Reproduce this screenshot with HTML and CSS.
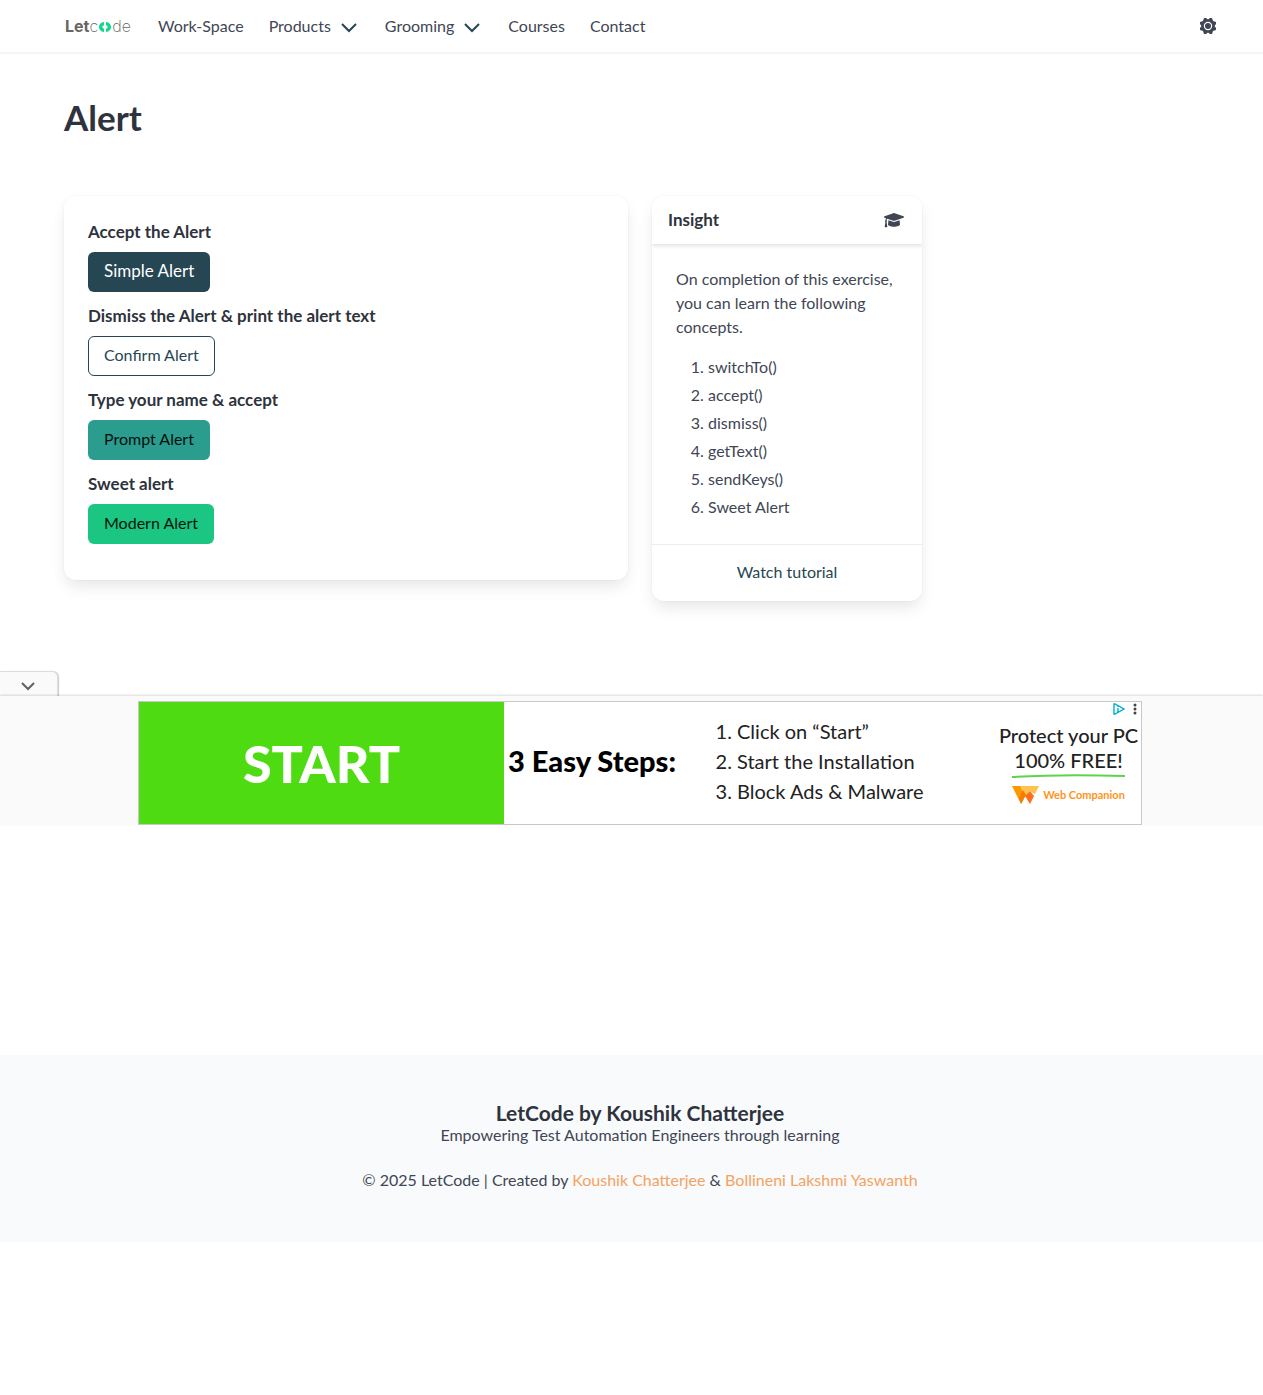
FILE: index.html
```html
<!DOCTYPE html>
<html lang="en">
<head>
<meta charset="utf-8">
<meta name="viewport" content="width=device-width, initial-scale=1">
<title>Alert | LetCode</title>
<link rel="stylesheet" href="styles.css">
</head>
<body>
<header class="navbar">
  <a class="logo" href="#" aria-label="Letcode"><b>Let</b><span>c</span><svg class="logo-mark" viewBox="0 0 14 10" aria-hidden="true"><path d="M6 0v3L4 5l2 2v3C3 9.800 1 7.500 1 5s2-4.800 5-5zM8 0v3l2 2-2 2v3c3-.2 5-2.500 5-5S11 .2 8 0z"/></svg><span>de</span></a>
  <nav class="nav-links" aria-label="Main">
    <a href="#">Work-Space</a>
    <a class="has-arrow" href="#">Products<svg class="arrow" viewBox="0 0 16 10" aria-hidden="true"><path d="M1 1l7 7 7-7"/></svg></a>
    <a class="has-arrow" href="#">Grooming<svg class="arrow" viewBox="0 0 16 10" aria-hidden="true"><path d="M1 1l7 7 7-7"/></svg></a>
    <a href="#">Courses</a>
    <a href="#">Contact</a>
  </nav>
  <button class="theme" type="button" aria-label="Toggle theme"><svg viewBox="0 0 16 16" aria-hidden="true"><circle cx="8" cy="8" r="6"/><path d="M10 0h2l1 3 3 1v2l-1.500 2 1.500 2v2l-3 1-1 3h-2L8 14.500 6 16H4l-1-3-3-1v-2l1.500-2L0 6V4l3-1 1-3h2l2 1.500z"/><circle class="ring" cx="8" cy="8" r="3.600"/></svg></button>
</header>

<main class="page">
  <h1>Alert</h1>
  <div class="columns">
    <section class="card exercise">
      <div class="field"><label for="simple">Accept the Alert</label><button class="btn dark" id="simple" type="button">Simple Alert</button></div>
      <div class="field"><label for="confirm">Dismiss the Alert &amp; print the alert text</label><button class="btn outline" id="confirm" type="button">Confirm Alert</button></div>
      <div class="field"><label for="prompt">Type your name &amp; accept</label><button class="btn teal" id="prompt" type="button">Prompt Alert</button></div>
      <div class="field"><label for="modern">Sweet alert</label><button class="btn green" id="modern" type="button">Modern Alert</button></div>
    </section>
    <aside class="card insight">
      <header class="card-head"><h2>Insight</h2><svg class="cap" viewBox="0 0 640 512" aria-hidden="true"><path d="M622 134 343 38c-15-5-31-5-46 0L18 134c-24 8-24 43 0 51l49 17c-11 14-17 32-18 52-10 6-17 18-17 31 0 12 6 22 14 29L21 470c-2 10 5 20 15 20h56c10 0 17-10 15-20L82 314c8-7 14-17 14-29s-6-23-15-30c1-16 9-32 21-42l195 67c9 3 27 7 46 0l279-95c24-8 24-43 0-51zM353 314c-33 11-59 3-66 0l-145-50-14 137c0 39 86 71 192 71s192-32 192-71l-14-137z"/></svg></header>
      <div class="card-body">
        <p>On completion of this exercise, you can learn the following concepts.</p>
        <ol><li>switchTo()</li><li>accept()</li><li>dismiss()</li><li>getText()</li><li>sendKeys()</li><li>Sweet Alert</li></ol>
      </div>
      <a class="card-foot" href="#">Watch tutorial</a>
    </aside>
  </div>
</main>

<section class="ad" aria-label="Advertisement">
  <button class="ad-tab" type="button" aria-label="Hide advertisement"><svg viewBox="0 0 14 9" aria-hidden="true"><path d="M1 1l6 6 6-6"/></svg></button>
  <div class="ad-bar">
    <div class="banner">
      <a class="start" href="#">START</a>
      <strong class="steps-title">3 Easy Steps:</strong>
      <ol class="steps"><li>Click on “Start”</li><li>Start the Installation</li><li>Block Ads &amp; Malware</li></ol>
      <div class="offer">
        <span>Protect your PC</span>
        <span>100% FREE!</span>
        <svg class="underline" viewBox="0 0 115 5" aria-hidden="true"><path d="M1 4Q50 1 114 3"/></svg>
        <div class="brand"><svg viewBox="0 0 27 18" aria-hidden="true"><path fill="#ff9800" d="M0 0h9l4 10-4 8z"/><path fill="#ffc24a" d="M8 0h19l-4 8-5-3-5 6z"/><path fill="#ff6d1f" d="m18 5 4 5-4 8-5-8z"/><path fill="#f57c00" d="m9 18 5-9-3-5-4 8z"/></svg>Web Companion</div>
      </div>
      <div class="choices">
        <svg class="adchoice" viewBox="0 0 12 12" aria-hidden="true"><path d="M1 1v10h1l9-5-9-5zM5 5v4M5 3v1"/></svg>
        <svg class="dots" viewBox="0 0 4 12" aria-hidden="true"><circle cx="2" cy="2" r="1.500"/><circle cx="2" cy="6" r="1.500"/><circle cx="2" cy="10" r="1.500"/></svg>
      </div>
    </div>
  </div>
</section>

<footer class="footer">
  <h2>LetCode by Koushik Chatterjee</h2>
  <p>Empowering Test Automation Engineers through learning</p>
  <p class="credits">© 2025 LetCode | Created by <a href="#">Koushik Chatterjee</a> &amp; <a href="#">Bollineni Lakshmi Yaswanth</a></p>
</footer>
</body>
</html>
```
FILE: styles.css
```css
:root {
  --text: #404654;
  --strong: #2e333d;
  --dark: #264653;
  --start: 64px;
  --end: 47px;
  --scrollbar: 17px;
}
* { box-sizing: border-box; }
body {
  margin: 0;
  background: #fff;
  color: var(--text);
  font: 16px/24px Lato, "Liberation Sans", sans-serif;
}
h1, h2, p, ol { margin: 0; }
a { color: inherit; text-decoration: none; }
button { font: inherit; cursor: pointer; }
svg { display: block; flex: none; }

.navbar {
  display: flex;
  align-items: center;
  min-height: 52px;
  padding: 0 var(--end) 0 var(--start);
  box-shadow: 0 2px 0 #f5f5f5;
}
.logo {
  display: flex;
  align-items: center;
  width: 70px;
  padding-left: 1px;
  color: #666;
  font-family: Inter, sans-serif;
  font-weight: 200;
  font-size: 16px;
}
.logo b { font-weight: 700; }
.logo-mark { width: 14px; height: 10px; margin-top: 2px; fill: #0fd98a; }
.nav-links { display: flex; gap: 25px; margin-left: 24px; }
.has-arrow { display: flex; align-items: center; gap: 10px; margin-right: 3px; }
.arrow { width: 16px; height: 10px; margin-top: 4px; fill: none; stroke: var(--dark); stroke-width: 2; }
.theme { margin-left: auto; padding: 0; border: 0; background: none; }
.theme svg { width: 16px; height: 16px; fill: var(--text); }
.theme .ring { stroke: #fff; stroke-width: 1.2; }

.page { padding: 47px var(--end) 70px var(--start); }
h1 { color: var(--strong); font-size: 35px; line-height: 36px; font-weight: 700; }
.columns {
  display: grid;
  grid-template-columns: repeat(12, 1fr);
  gap: 24px;
  align-items: start;
  margin-top: 61px;
}
.card {
  border-radius: 12px;
  background: #fff;
  box-shadow: 0 8px 16px -2px rgba(10, 10, 10, .1), 0 0 0 1px rgba(10, 10, 10, .02);
}
.exercise { grid-column: span 6; padding: 24px 24px 36px; }
.field + .field { margin-top: 12px; }
.field label { display: block; margin-bottom: 8px; color: var(--strong); font-size: 17px; font-weight: 700; }
.btn { display: block; height: 40px; padding: 0 15px 2px; border: 1px solid transparent; border-radius: 6px; }
.dark { background: var(--dark); color: #fff; font-size: 17px; }
.outline { border-color: var(--dark); background: #fff; color: var(--dark); }
.teal { background: #2a9d8f; color: #050f0e; }
.green { background: #1ac681; color: #03140d; }

.insight { grid-column: span 3; }
.card-head {
  display: flex;
  justify-content: space-between;
  align-items: center;
  padding: 12px 18px 12px 16px;
  box-shadow: 0 2px 4px rgba(10, 10, 10, .12);
  clip-path: inset(0 0 -6px 0);
}
.card-head h2 { color: var(--strong); font-size: 17px; line-height: 24px; font-weight: 700; }
.cap { width: 20px; height: 16px; fill: var(--text); }
.card-body { padding: 23px 24px 25px; }
.card-body ol { margin-top: 16px; padding-left: 32px; }
.card-body li + li { margin-top: 4px; }
.card-foot { display: block; padding: 15px 16px 17px; border-top: 1px solid #ededef; color: var(--dark); text-align: center; }

.ad-tab {
  display: grid;
  place-items: center;
  width: 58px;
  height: 25px;
  padding: 4px 2px 0 0;
  border: 1px solid #ddd;
  border-width: 1px 1px 0 0;
  border-radius: 0 6px 0 0;
  background: #fafafa;
  box-shadow: 1px 0 1px rgba(0, 0, 0, .2);
}
.ad-tab svg { width: 14px; height: 9px; fill: none; stroke: #616161; stroke-width: 2; }
.ad-bar {
  padding: 5px 0 0 var(--scrollbar);
  background: #fafafa;
  box-shadow: 0 -1px 2px rgba(0, 0, 0, .15);
}
.banner {
  position: relative;
  display: grid;
  grid-template-columns: 365px 209px 1fr 145px;
  align-items: center;
  max-width: 1004px;
  min-height: 124px;
  margin: 0 auto;
  border: 1px solid #c8c8c8;
  background: #fff;
  color: #222;
}
.start {
  display: grid;
  place-items: center;
  align-self: stretch;
  background: #4fdb11;
  color: #fff;
  font-size: 52px;
  line-height: 60px;
  font-weight: 900;
}
.steps-title { padding: 0 0 4px 4px; color: #000; font-size: 29px; line-height: 30px; font-weight: 900; white-space: nowrap; }
.steps { padding: 0 0 4px 24px; font-size: 20px; line-height: 30px; white-space: nowrap; }
.offer { padding-top: 4px; font-size: 20px; line-height: 25px; font-weight: 500; text-align: center; white-space: nowrap; }
.offer span { display: block; }
.underline { width: 115px; height: 5px; margin: 0 auto; fill: none; stroke: #5bd64a; stroke-width: 2; }
.brand { display: flex; align-items: center; justify-content: center; gap: 4px; margin-top: 4px; color: #ff9420; font-size: 11px; font-weight: 700; }
.brand svg { width: 27px; height: 18px; }
.choices { position: absolute; top: 1px; right: 4px; display: flex; gap: 8px; }
.adchoice { width: 12px; height: 12px; fill: none; stroke: #00aecd; stroke-width: 1.4; }
.dots { width: 4px; height: 12px; fill: #444; }

.footer {
  margin: 230px 0 152px;
  padding: 48px 24px 50px calc(24px + var(--scrollbar));
  background: #f9fafc;
  text-align: center;
}
.footer h2 { color: var(--strong); font-size: 21px; line-height: 20px; font-weight: 700; }
.footer .credits { margin-top: 21px; }
.footer .credits a { color: #f4a261; }
```
